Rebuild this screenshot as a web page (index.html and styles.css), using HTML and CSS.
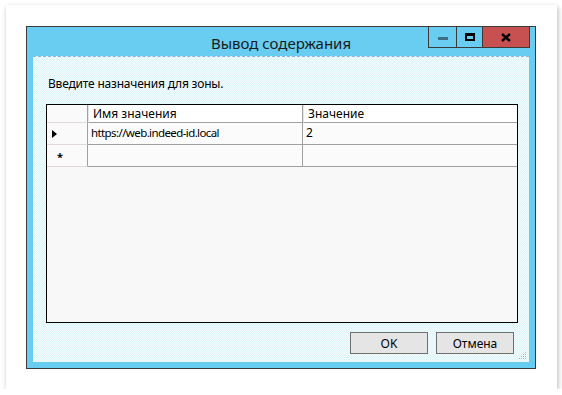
FILE: index.html
```html
<!DOCTYPE html>
<html lang="ru">
<head>
  <meta charset="UTF-8" />
  <title>Вывод содержания</title>
  <link rel="stylesheet" href="styles.css">
</head>
<body>

  <div class="frame">
    <div class="dialog">
      <div class="titlebar">
        <span></span>
        <div class="title">Вывод содержания</div>
        <div class="controls">
          <span class="ctl ctl-min"><i class="min-glyph"></i></span>
          <span class="ctl ctl-max"><i class="max-glyph"></i></span>
          <span class="ctl ctl-close">
            <svg width="10" height="9" viewBox="0 0 10 9"><path d="M1 1 L9 8 M9 1 L1 8" stroke="#000" stroke-width="2.4" fill="none"/></svg>
          </span>
        </div>
      </div>

      <div class="content">
        <div class="prompt">Введите назначения для зоны.</div>

        <div class="grid">
          <div class="cell head rowhead"></div>
          <div class="cell head">Имя значения</div>
          <div class="cell head last">Значение</div>

          <div class="cell rowhead"><i class="current"></i></div>
          <div class="cell url">https://web.indeed-id.local</div>
          <div class="cell last">2</div>

          <div class="cell rowhead"><span class="star">*</span></div>
          <div class="cell"></div>
          <div class="cell last"></div>
        </div>

        <div class="buttons">
          <button class="btn">OK</button>
          <button class="btn">Отмена</button>
        </div>
        <div class="grip">
          <svg width="8" height="8" viewBox="0 0 8 8" fill="#a9b4c4">
            <rect x="6" y="0" width="1" height="1"/>
            <rect x="4" y="2" width="1" height="1"/><rect x="6" y="2" width="1" height="1"/>
            <rect x="2" y="4" width="1" height="1"/><rect x="4" y="4" width="1" height="1"/><rect x="6" y="4" width="1" height="1"/>
            <rect x="0" y="6" width="1" height="1"/><rect x="2" y="6" width="1" height="1"/><rect x="4" y="6" width="1" height="1"/><rect x="6" y="6" width="1" height="1"/>
          </svg>
        </div>
      </div>
    </div>
  </div>

</body>
</html>
```

FILE: styles.css
```css
:root {
  --color-frame-blue: #68cdf0;
  --color-border: #3a3a3a;
  --color-close: #c75050;
  --color-text: #000000;
  --ui-font: 'Noto Sans', 'DejaVu Sans', sans-serif;
}

body {
  margin: 0;
  background: #ffffff;
  font-family: var(--ui-font);
}

.frame {
  width: 551px;
  height: 384px;
  margin: 5px 0 0 6px;
  padding: 21px 0 0 20px;
  box-sizing: border-box;
  background: #ffffff;
  box-shadow: 1px 2px 5px rgba(0, 0, 0, 0.28);
}

.dialog {
  width: 510px;
  height: 343px;
  box-sizing: border-box;
  border: 1px solid var(--color-border);
  background: var(--color-frame-blue);
  padding: 0 6px 6px 6px;
  display: flex;
  flex-direction: column;
}

.titlebar {
  height: 29px;
  display: grid;
  grid-template-columns: 1fr auto 1fr;
  align-items: start;
}

.title {
  font-size: 15px;
  line-height: 20px;
  margin-top: 6px;
  color: #1a1a1a;
  white-space: nowrap;
}

.controls {
  justify-self: end;
  display: flex;
  margin: -1px -1px 0 0;
}

.ctl {
  height: 22px;
  box-sizing: border-box;
  border: 1px solid var(--color-border);
  display: flex;
  align-items: center;
  justify-content: center;
}

.ctl + .ctl {
  border-left: none;
}

.ctl-min {
  width: 29px;
}

.ctl-max {
  width: 26px;
}

.ctl-close {
  width: 47px;
  background: var(--color-close);
}

.min-glyph {
  width: 10px;
  height: 3px;
  margin-top: 3px;
  background: #3d6e86;
}

.max-glyph {
  width: 10px;
  height: 8px;
  box-sizing: border-box;
  border: 2px solid #000;
  border-top-width: 3px;
}

.content {
  flex: 1;
  position: relative;
  border-top: 1px dashed #8fb4d8;
  background-color: #eaf8fb;
  background-image: repeating-conic-gradient(#dcf3f8 0 25%, #f5fcfd 0 50%);
  background-size: 2px 2px;
  padding: 0 11px 0 13px;
  display: flex;
  flex-direction: column;
}

.prompt {
  margin: 19px 0 0 2px;
  font-size: 12px;
  line-height: 16px;
  letter-spacing: -0.2px;
  color: var(--color-text);
}

.grid {
  margin-top: 12px;
  height: 219px;
  box-sizing: border-box;
  border: 1px solid #000;
  background: #f8f8f8;
  display: grid;
  grid-template-columns: 41px 215px 1fr;
  grid-template-rows: 18px 22px 22px;
  align-content: start;
}

.cell {
  border-right: 1px solid #a0a0a0;
  border-bottom: 1px solid #a0a0a0;
  background: #fbfbfb;
  font-size: 12px;
  line-height: 16px;
  padding: 2px 3px 0;
  color: var(--color-text);
  white-space: nowrap;
  overflow: hidden;
}

.cell.url {
  font-size: 11.5px;
  letter-spacing: -0.6px;
}

.cell.last {
  border-right: none;
}

.cell.head {
  background: #ffffff;
  padding: 0 4px;
  line-height: 17px;
}

.cell.head + .cell.head {
  border-left: 1px solid #e6e6e6;
}

.cell.rowhead {
  background: #fafafa;
  border-bottom-color: #e2d8d8;
  border-right-color: #a0a0a0;
  padding: 0 0 0 5px;
  display: flex;
  align-items: center;
}

.current {
  width: 0;
  height: 0;
  border-top: 4px solid transparent;
  border-bottom: 4px solid transparent;
  border-left: 5px solid #000;
}

.star {
  font-size: 11px;
  font-weight: 700;
  line-height: 11px;
  margin: 2px 0 0 5px;
}

.buttons {
  margin-top: 9px;
  display: flex;
  justify-content: flex-end;
  gap: 8px;
  padding-right: 4px;
}

.btn {
  width: 78px;
  height: 22px;
  box-sizing: border-box;
  border: 1px solid #707070;
  background: #e5e5e5;
  font-family: var(--ui-font);
  font-size: 12px;
  color: var(--color-text);
  padding: 0;
}

.grip {
  position: absolute;
  right: 2px;
  bottom: 2px;
  line-height: 0;
}
```
